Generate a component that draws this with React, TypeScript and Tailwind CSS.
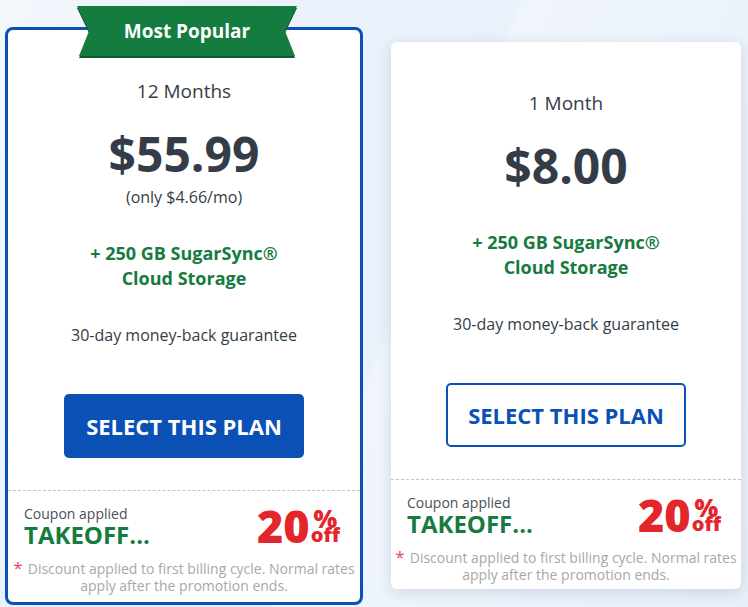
import React from "react";

type Plan = {
  term: string;
  price: string;
  perMonth?: string;
  featured?: boolean;
};

function Banner() {
  return (
    <div className="absolute top-0 left-[72px] w-[220px] h-[52px] flex items-center justify-center">
      <svg className="absolute inset-0" width="220" height="52" viewBox="0 0 220 52">
        <polygon points="0,2 220,2 208,27 218,52 2,52 12,27" fill="#0b5a2b" />
        <polygon points="0,0 220,0 208,25 218,50 2,50 12,25" fill="#137c3e" />
      </svg>
      <span className="relative text-white font-bold text-[19px] leading-none -mt-[1px]">Most Popular</span>
    </div>
  );
}

function PlanCard({ term, price, perMonth, featured }: Plan) {
  return (
    <div
      className={
        featured
          ? "w-[358px] bg-white border-[3px] border-[#0b51b5] rounded-[8px] flex flex-col items-center pt-[48px] pb-[8px]"
          : "w-[350px] bg-white rounded-[6px] shadow-[0_3px_14px_rgba(20,50,100,0.14)] flex flex-col items-center pt-[48px] pb-[6px]"
      }
    >
      <div className="text-[19px] leading-[26px] text-[#343d47]">{term}</div>
      <div className="mt-[20px] text-[48px] leading-[60px] font-bold text-[#343d47]">{price}</div>
      {perMonth && (
        <div className="mt-[2px] text-[16px] leading-[22px] text-[#343d47]">{perMonth}</div>
      )}
      <div
        className={
          (featured ? "mt-[33px]" : "mt-[34px]") +
          " text-center text-[18px] leading-[25px] font-bold text-[#177a3f]"
        }
      >
        + 250 GB SugarSync®
        <br />
        Cloud Storage
      </div>
      <div className="mt-[33px] text-[16px] leading-[22px] text-[#343d47]">30-day money-back guarantee</div>
      <button
        className={
          featured
            ? "mt-[48px] w-[240px] h-[64px] rounded-[5px] bg-[#0b51b5] text-white font-bold text-[22px]"
            : "mt-[48px] w-[240px] h-[64px] rounded-[5px] border-2 border-[#0b51b5] bg-white text-[#0b51b5] font-bold text-[22px]"
        }
      >
        SELECT THIS PLAN
      </button>
      <div className="mt-[32px] w-full border-t border-dashed border-[#c4c4c4]" />
      <div className="w-full flex items-center justify-between pl-[16px] pr-[20px] pt-[14px]">
        <div className="flex flex-col">
          <span className="text-[14px] leading-[17px] text-[#4a4f55]">Coupon applied</span>
          <span className="text-[24px] leading-[25px] font-bold text-[#177a3f]">TAKEOFF...</span>
        </div>
        <div className="flex items-center text-[#e3262b] font-extrabold">
          <span className="text-[45px] leading-[40px]">20</span>
          <span className="flex flex-col items-center ml-[1px]">
            <span className="text-[25px] leading-[18px]">%</span>
            <span className="text-[20px] leading-[16px]">off</span>
          </span>
        </div>
      </div>
      <div className="mt-[12px] text-center text-[14px] leading-[17px] text-[#a8a8a8]">
        <div className="whitespace-nowrap">
          <span className="text-[#e8475a] text-[17px] leading-none mr-[5px]">*</span>
          Discount applied to first billing cycle. Normal rates
        </div>
        <div className="whitespace-nowrap">apply after the promotion ends.</div>
      </div>
    </div>
  );
}

export default function App() {
  return (
    <div className="w-[748px] h-[607px] overflow-hidden font-['Open_Sans',sans-serif] bg-[linear-gradient(112deg,#f4f7fc_0%,#eaf1fa_30%,#e9f1fa_52%,#f0f5fc_53%,#e7eff9_100%)] flex items-start pl-[5px] pt-[6px] gap-[28px]">
      <div className="relative pt-[21px]">
        <PlanCard term="12 Months" price="$55.99" perMonth="(only $4.66/mo)" featured />
        <Banner />
      </div>
      <div className="mt-[36px]">
        <PlanCard term="1 Month" price="$8.00" />
      </div>
    </div>
  );
}
